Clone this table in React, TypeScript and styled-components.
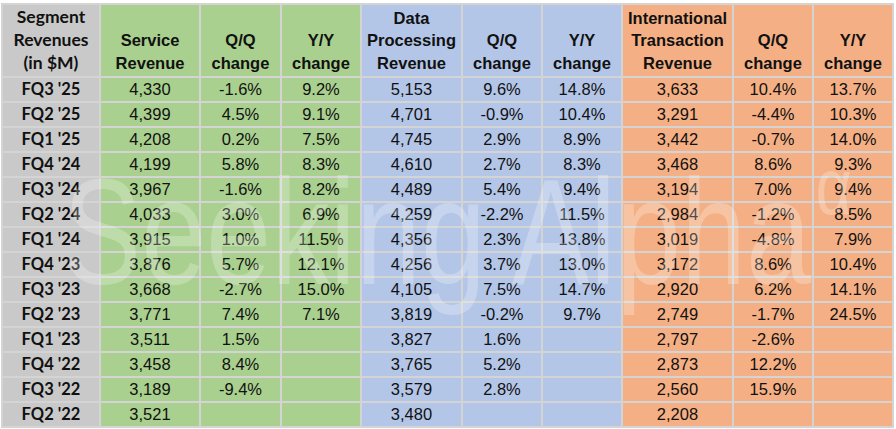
import React from 'react';
import styled, {createGlobalStyle} from 'styled-components';

type Tone = 'grey' | 'green' | 'blue' | 'orange';

const tones: Record<Tone, string> = {
    grey: '#c9c9c9',
    green: '#a9d08e',
    blue: '#b4c6e7',
    orange: '#f4b084',
};

const widths = [96, 98, 79, 78, 99, 78, 78, 109, 78, 78];
const columnTone: Tone[] = ['grey', 'green', 'green', 'green', 'blue', 'blue', 'blue', 'orange', 'orange', 'orange'];

const headers = [
    ['Segment', 'Revenues', '(in $M)'],
    ['Service', 'Revenue'],
    ['Q/Q', 'change'],
    ['Y/Y', 'change'],
    ['Data', 'Processing', 'Revenue'],
    ['Q/Q', 'change'],
    ['Y/Y', 'change'],
    ['International', 'Transaction', 'Revenue'],
    ['Q/Q', 'change'],
    ['Y/Y', 'change'],
];

const rows: string[][] = [
    ["FQ3 '25", '4,330', '-1.6%', '9.2%', '5,153', '9.6%', '14.8%', '3,633', '10.4%', '13.7%'],
    ["FQ2 '25", '4,399', '4.5%', '9.1%', '4,701', '-0.9%', '10.4%', '3,291', '-4.4%', '10.3%'],
    ["FQ1 '25", '4,208', '0.2%', '7.5%', '4,745', '2.9%', '8.9%', '3,442', '-0.7%', '14.0%'],
    ["FQ4 '24", '4,199', '5.8%', '8.3%', '4,610', '2.7%', '8.3%', '3,468', '8.6%', '9.3%'],
    ["FQ3 '24", '3,967', '-1.6%', '8.2%', '4,489', '5.4%', '9.4%', '3,194', '7.0%', '9.4%'],
    ["FQ2 '24", '4,033', '3.0%', '6.9%', '4,259', '-2.2%', '11.5%', '2,984', '-1.2%', '8.5%'],
    ["FQ1 '24", '3,915', '1.0%', '11.5%', '4,356', '2.3%', '13.8%', '3,019', '-4.8%', '7.9%'],
    ["FQ4 '23", '3,876', '5.7%', '12.1%', '4,256', '3.7%', '13.0%', '3,172', '8.6%', '10.4%'],
    ["FQ3 '23", '3,668', '-2.7%', '15.0%', '4,105', '7.5%', '14.7%', '2,920', '6.2%', '14.1%'],
    ["FQ2 '23", '3,771', '7.4%', '7.1%', '3,819', '-0.2%', '9.7%', '2,749', '-1.7%', '24.5%'],
    ["FQ1 '23", '3,511', '1.5%', '', '3,827', '1.6%', '', '2,797', '-2.6%', ''],
    ["FQ4 '22", '3,458', '8.4%', '', '3,765', '5.2%', '', '2,873', '12.2%', ''],
    ["FQ3 '22", '3,189', '-9.4%', '', '3,579', '2.8%', '', '2,560', '15.9%', ''],
    ["FQ2 '22", '3,521', '', '', '3,480', '', '', '2,208', '', ''],
];

export default function App() {
    return (
        <>
            <Global />
            <Sheet>
                <Table>
                    <colgroup>
                        {widths.map((w, i) => <col key={i} style={{width: w}} />)}
                    </colgroup>
                    <thead>
                        <tr>
                            {headers.map((lines, i) =>
                                <HeadCell key={i} $tone={columnTone[i]} $label={i === 0}>
                                    {lines.map((l, j) => <div key={j}>{l}</div>)}
                                </HeadCell>)}
                        </tr>
                    </thead>
                    <tbody>
                        {rows.map((row, r) =>
                            <tr key={r}>
                                {row.map((value, i) =>
                                    i === 0
                                        ? <LabelCell key={i} $tone="grey">{value}</LabelCell>
                                        : <Cell key={i} $tone={columnTone[i]}>{value}</Cell>)}
                            </tr>)}
                    </tbody>
                </Table>
                <Watermark>Seeking Alpha<Mark>α</Mark></Watermark>
            </Sheet>
        </>
    );
}

const Global = createGlobalStyle`
    html, body {
        margin: 0;
        background: #ffffff;
    }
`;

const Sheet = styled.div`
    position: relative;
    width: 896px;
    height: 429px;
    overflow: hidden;
    padding: 3px 0 0 1px;
    box-sizing: border-box;
`;

const Table = styled.table`
    table-layout: fixed;
    width: 893px;
    border-collapse: separate;
    border-spacing: 2px;
    background: #d4d4d4;
`;

const BaseCell = styled.td<{$tone: Tone}>`
    padding: 0;
    background: ${p => tones[p.$tone]};
    text-align: center;
    color: #111;
    white-space: nowrap;
`;

// header cell content must stay within 71px, or the row grows
const HeadCell = styled(BaseCell).attrs({as: 'th'})<{$label: boolean}>`
    height: 69px;
    vertical-align: bottom;
    font-family: ${p => p.$label ? 'Lato, "Open Sans", sans-serif' : '"Liberation Sans", Arial, sans-serif'};
    font-size: ${p => p.$label ? '17.5px' : '16.5px'};
    font-weight: bold;
    line-height: ${p => p.$label ? '23px' : '22.5px'};
    padding-bottom: 2px;
`;

const Cell = styled(BaseCell)`
    height: 23px;
    font-family: "Liberation Sans", Arial, sans-serif;
    font-size: 16.5px;
    line-height: 23px;
`;

const LabelCell = styled(Cell)`
    font-family: Lato, "Open Sans", sans-serif;
    font-size: 16.5px;
    font-weight: bold;
`;

const Watermark = styled.div`
    position: absolute;
    left: 63px;
    top: 112px;
    font-family: "Liberation Sans", Arial, sans-serif;
    font-size: 150px;
    line-height: 150px;
    color: rgba(255, 255, 255, 0.25);
    white-space: nowrap;
    transform: scaleX(0.78);
    transform-origin: left top;
    pointer-events: none;
`;

const Mark = styled.span`
    font-size: 80px;
    vertical-align: 70px;
    margin-left: 6px;
`;
